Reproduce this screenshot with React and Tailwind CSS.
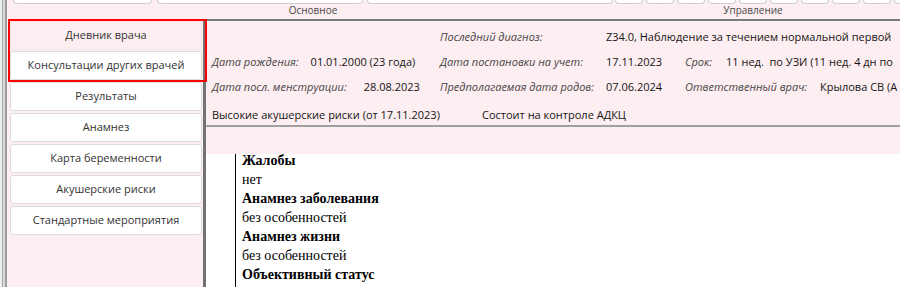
import React from 'react';

const topButtonsMain = [
  { w: 139, ml: 0 },
  { w: 206, ml: 5 },
  { w: 246, ml: 4 },
];

const topButtonsCtrl = Array.from({ length: 10 }, (_, i) => i);

const sideButtons = [
  'Результаты',
  'Анамнез',
  'Карта беременности',
  'Акушерские риски',
  'Стандартные мероприятия',
];

const Label = ({ children, className = '' }) => (
  <span className={`whitespace-nowrap italic text-[#454545] ${className}`}>{children}</span>
);

const Value = ({ children, className = '' }) => (
  <span className={`whitespace-pre text-[#151515] ${className}`}>{children}</span>
);

const Toolbar = () => (
  <div className="flex h-[19px] shrink-0 pl-[6px]">
    <div className="flex w-[600px] flex-col">
      <div className="flex h-[4px]">
        {topButtonsMain.map((b, i) => (
          <div
            key={i}
            style={{ width: b.w, marginLeft: b.ml }}
            className="h-[4px] rounded-b-[4px] border border-t-0 border-[#cfcfcf] bg-white"
          />
        ))}
      </div>
      <div className="text-center text-[10px] leading-[13px] text-[#4a4a4a]">Основное</div>
    </div>
    <div className="flex w-[287px] flex-col overflow-hidden">
      <div className="flex h-[4px] gap-[3px] pl-[2px]">
        {topButtonsCtrl.map((i) => (
          <div
            key={i}
            className="h-[4px] w-[28px] shrink-0 rounded-b-[4px] border border-t-0 border-[#cfcfcf] bg-white"
          />
        ))}
      </div>
      <div className="w-[280px] text-center text-[10px] leading-[13px] text-[#4a4a4a]">Управление</div>
    </div>
  </div>
);

const SideButton = ({ children, active }) => (
  <div
    className={`flex h-[29px] w-[192px] items-center justify-center rounded-[3px] border text-[#333] ${
      active ? 'border-[#f6e6ea] bg-[#fdeef1]' : 'border-[#dcdcdc] bg-white'
    }`}
  >
    {children}
  </div>
);

const Sidebar = () => (
  <div className="flex w-[196px] shrink-0 flex-col">
    <div className="relative z-10 ml-[1px] flex w-[199px] flex-col gap-[1px] border-2 border-[#ff0000]">
      <SideButton active>Дневник врача</SideButton>
      <SideButton>Консультации других врачей</SideButton>
    </div>
    <div className="ml-[3px] flex flex-col gap-[2px]">
      {sideButtons.map((t) => (
        <SideButton key={t}>{t}</SideButton>
      ))}
    </div>
  </div>
);

const InfoPanel = () => (
  <div className="shrink-0 border-t-2 border-b-2 border-t-[#7a7a7a] border-b-[#a0a0a0] pl-[6px] pt-[4px]">
    <div className="flex h-[25px] items-center">
      <div className="w-[228px] shrink-0" />
      <Label className="w-[166px] shrink-0">Последний диагноз:</Label>
      <Value>Z34.0, Наблюдение за течением нормальной первой</Value>
    </div>
    <div className="flex h-[25px] items-center">
      <div className="w-[228px] shrink-0 whitespace-nowrap">
        <Label>Дата рождения:</Label>
        <Value className="ml-[12px]">01.01.2000 (23 года)</Value>
      </div>
      <Label className="w-[166px] shrink-0">Дата постановки на учет:</Label>
      <Value className="w-[79px] shrink-0">17.11.2023</Value>
      <Label className="shrink-0">Срок:</Label>
      <Value className="ml-[14px]">11 нед.  по УЗИ (11 нед. 4 дн по</Value>
    </div>
    <div className="flex h-[25px] items-center">
      <div className="w-[228px] shrink-0 whitespace-nowrap">
        <Label>Дата посл. менструации:</Label>
        <Value className="ml-[17px]">28.08.2023</Value>
      </div>
      <Label className="w-[166px] shrink-0">Предполагаемая дата родов:</Label>
      <Value className="w-[79px] shrink-0">07.06.2024</Value>
      <Label className="shrink-0">Ответственный врач:</Label>
      <Value className="ml-[13px]">Крылова СВ (А</Value>
    </div>
    <div className="mt-[5px] flex h-[20px] items-center">
      <Value className="w-[270px] shrink-0">Высокие акушерские риски (от 17.11.2023)</Value>
      <Value>Состоит на контроле АДКЦ</Value>
    </div>
  </div>
);

const Protocol = () => (
  <div className="flex min-h-0 flex-1 bg-white">
    <div className="w-[29px] shrink-0" />
    <div className="w-[1px] shrink-0 bg-black" />
    <div className="-mt-[3px] pl-[6px] font-['Liberation_Serif',serif] text-[14px] leading-[19px] text-black">
      <div className="font-bold">Жалобы</div>
      <div>нет</div>
      <div className="font-bold">Анамнез заболевания</div>
      <div>без особенностей</div>
      <div className="font-bold">Анамнез жизни</div>
      <div>без особенностей</div>
      <div className="font-bold">Объективный статус</div>
    </div>
  </div>
);

export default function App() {
  return (
    <div className="flex h-[287px] w-[900px] overflow-hidden bg-[#fdeef1] font-['Open_Sans',sans-serif] text-[11px]">
      <div className="flex shrink-0">
        <div className="w-[2px] bg-[#efefef]" />
        <div className="w-[1px] bg-[#a9a9a9]" />
        <div className="w-[2px] bg-[#d9d9d9]" />
        <div className="w-[2px] bg-[#9d9d9d]" />
      </div>
      <div className="flex min-w-0 flex-1 flex-col">
        <Toolbar />
        <div className="flex min-h-0 flex-1">
          <Sidebar />
          <div className="w-[3px] shrink-0 bg-[#727272]" />
          <div className="flex min-w-0 flex-1 flex-col overflow-hidden">
            <InfoPanel />
            <div className="h-[27px] shrink-0" />
            <Protocol />
          </div>
        </div>
      </div>
    </div>
  );
}
